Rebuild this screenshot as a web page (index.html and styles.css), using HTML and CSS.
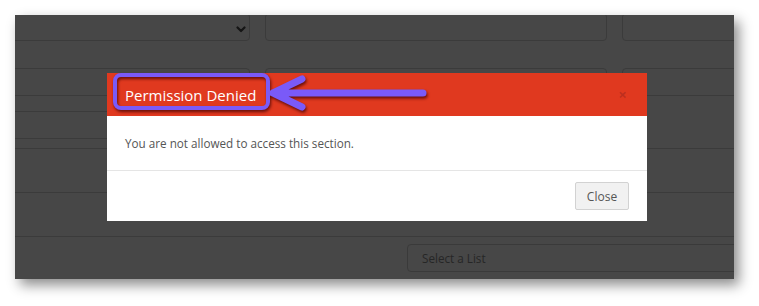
FILE: index.html
```html
<!DOCTYPE html>
<html lang="en">
<head>
  <meta charset="UTF-8">
  <title>Permission Denied</title>
  <meta name="viewport" content="width=device-width, initial-scale=1.0">
  <link rel="stylesheet" href="styles.css">
</head>
<body>

<div class="shot">
  <div class="page">
    <div class="fields">
      <div class="field-row first">
        <div class="field select">
          <svg class="chevron" width="10" height="7" viewBox="0 0 10 7"><path d="M1.5 1.5 L5 5 L8.5 1.5" fill="none" stroke="#151515" stroke-width="2.2" stroke-linecap="round" stroke-linejoin="round"/></svg>
        </div>
        <div class="field"></div>
        <div class="field"></div>
      </div>
      <div class="field-row">
        <div class="field"></div>
        <div class="field"></div>
        <div class="field"></div>
      </div>
      <div class="field-row">
        <div class="field"></div>
        <div></div>
        <div></div>
      </div>
    </div>
    <div class="rows">
      <div class="row"></div>
      <div class="row"></div>
      <div class="row last">
        <div class="field list">Select a List</div>
      </div>
    </div>
  </div>

  <div class="modal">
    <div class="modal-header">
      <h4 class="modal-title">Permission Denied</h4>
      <span class="modal-x">&times;</span>
    </div>
    <div class="modal-body">You are not allowed to access this section.</div>
    <div class="modal-footer">
      <button class="btn">Close</button>
    </div>
  </div>

  <!-- annotation drawn over the screenshot -->
  <svg class="callout" width="330" height="50" viewBox="0 0 330 50">
    <rect x="5" y="5" width="153" height="33" rx="6" fill="none" stroke="#7a5af8" stroke-width="4"/>
    <path d="M163 23 L313 23 M163 23 L192 9 M163 23 L192 37" fill="none" stroke="#7a5af8" stroke-width="7" stroke-linecap="round" stroke-linejoin="round"/>
  </svg>
</div>

</body>
</html>
```

FILE: styles.css
```css
:root {
  --page-bg: #474747;
  --line: #3b3b3b;
  --danger: #e0391f;
  --text: #555555;
}
body {
  margin: 0;
  background: #ffffff;
  font-family: "Open Sans", "Liberation Sans", sans-serif;
  height: 306px;
  overflow: hidden;
}
.shot {
  position: relative;
  margin: 15px 0 0 15px;
  width: 719px;
  height: 264px;
  box-shadow: 5px 6px 12px rgba(0, 0, 0, 0.45);
}
.page {
  width: 100%;
  height: 100%;
  background: var(--page-bg);
  overflow: hidden;
}
.fields {
  width: 760px;
  margin-left: -20px;
}
.field-row {
  display: grid;
  grid-template-columns: 255px 342px 133px;
  column-gap: 15px;
  margin-bottom: 15px;
}
.field-row.first {
  margin-top: -2px;
  margin-bottom: 27px;
}
.field {
  height: 28px;
  box-sizing: border-box;
  border: 1px solid var(--line);
  border-radius: 4px;
  position: relative;
}
.chevron {
  position: absolute;
  right: 3px;
  top: 12px;
}
.rows {
  margin-top: -6px;
}
.row {
  height: 44px;
  border-top: 1px solid var(--line);
  box-sizing: border-box;
}
.row.last {
  height: 60px;
  padding-top: 7px;
}
.list {
  margin-left: 392px;
  width: 360px;
  font-size: 11.7px;
  color: #262626;
  padding-left: 14px;
  line-height: 26px;
  border-color: #3a3a3a;
}
.modal {
  position: absolute;
  left: 92px;
  top: 58px;
  width: 540px;
  background: #ffffff;
}
.modal-header {
  background: var(--danger);
  height: 43px;
  display: flex;
  align-items: center;
  justify-content: space-between;
  padding: 0 18px;
  box-sizing: border-box;
}
.modal-title {
  margin: 0;
  color: #ffffff;
  font-size: 15px;
  font-weight: 400;
  line-height: 20px;
}
.modal-x {
  color: #b92f1f;
  font-size: 15px;
  font-weight: 700;
  line-height: 15px;
  opacity: 0.9;
  margin-right: 2px;
}
.modal-body {
  padding: 15px 18px;
  font-size: 11.7px;
  line-height: 24px;
  color: var(--text);
}
.modal-footer {
  border-top: 1px solid #e5e5e5;
  height: 51px;
  box-sizing: border-box;
  padding: 11px 18px 0;
  display: flex;
  justify-content: flex-end;
}
.btn {
  height: 28px;
  width: 54px;
  font-family: "Open Sans", "Liberation Sans", sans-serif;
  font-size: 12px;
  color: var(--text);
  background: #f1f1f1;
  border: 1px solid #d2d2d2;
  border-radius: 2px;
  padding: 0;
}
.callout {
  position: absolute;
  left: 95px;
  top: 55px;
  filter: drop-shadow(1px 2px 1.5px rgba(60, 0, 0, 0.75));
}
```
